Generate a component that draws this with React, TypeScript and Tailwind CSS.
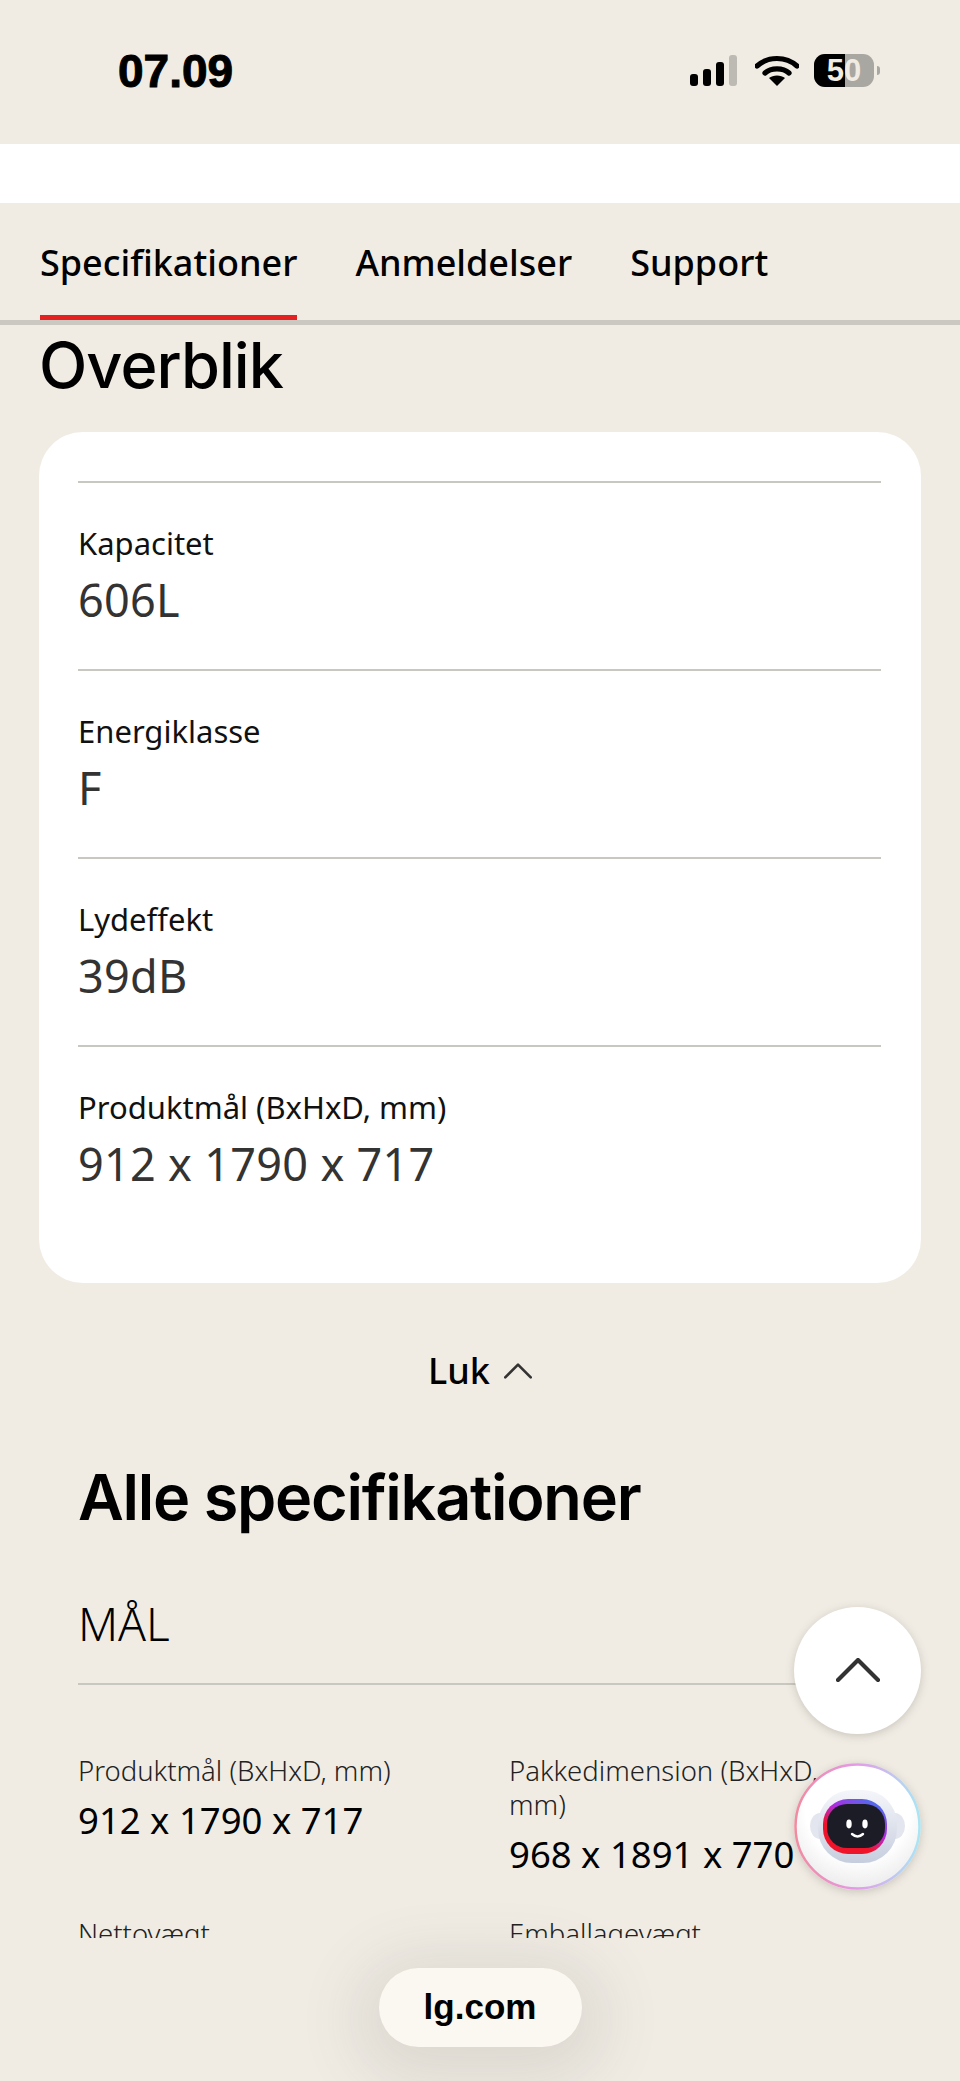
import React from "react";

const uiFont = "font-['Noto_Sans','Open_Sans',sans-serif]";

function Chevron({ className }: { className: string }) {
  return (
    <svg viewBox="0 0 44 24" fill="none" className={className}>
      <path d="M2 22 L22 2 L42 22" stroke="currentColor" strokeWidth="4.2" strokeLinecap="round" strokeLinejoin="round" />
    </svg>
  );
}

function StatusIcons() {
  return (
    <div className="flex items-center">
      <svg width="48" height="32" viewBox="0 0 48 32" className="mr-[17px]">
        <rect x="0" y="19" width="8" height="12" rx="3" fill="#000" />
        <rect x="13" y="14" width="8" height="17" rx="3" fill="#000" />
        <rect x="26" y="7" width="8" height="24" rx="3" fill="#000" />
        <rect x="39" y="0" width="8" height="31" rx="3" fill="#bdbab4" />
      </svg>
      <svg width="44" height="32" viewBox="0 0 44 32" className="mr-[15px]">
        <path d="M2 11 C13 1 31 1 42 11" fill="none" stroke="#000" strokeWidth="5.2" strokeLinecap="round" />
        <path d="M10 18 C16 12.5 28 12.5 34 18" fill="none" stroke="#000" strokeWidth="5.2" strokeLinecap="round" />
        <path d="M14 23 C18 19.5 26 19.5 30 23 L22 31 Z" fill="#000" />
      </svg>
      <div className="relative w-[60px] h-[33px] rounded-[11px] overflow-hidden bg-[#a9a7a1] flex items-center justify-center">
        <div className="absolute left-0 top-0 bottom-0 w-[31px] bg-black" />
        <span className="relative font-['Liberation_Sans',sans-serif] font-bold text-[31px] leading-none text-[#f0ece4]">50</span>
      </div>
      <div className="w-[3px] h-[9px] ml-[3px] rounded-r-full bg-[#a9a7a1]" />
    </div>
  );
}

function OverviewRow({ label, value }: { label: string; value: string }) {
  return (
    <div className="h-[188px] border-t-2 border-[#c9c8c0] pt-[40px]">
      <div className="text-[31px] leading-[40px] text-[#111]">{label}</div>
      <div className="mt-[7px] text-[45px] leading-[60px] tracking-[0.3px] text-[#333]">{value}</div>
    </div>
  );
}

function SpecCell({ label, value }: { label: string; value: string }) {
  return (
    <div>
      <div className="text-[27.5px] leading-[34px] font-[350] text-[#222]">{label}</div>
      <div className="mt-[8px] text-[36.5px] leading-[48px] whitespace-nowrap text-black">{value}</div>
    </div>
  );
}

// Round robot mascot on the chat launcher
function Mascot() {
  return (
    <svg width="127" height="127" viewBox="0 0 127 127">
      <defs>
        <linearGradient id="ring" x1="0" y1="0.5" x2="1" y2="0.5">
          <stop offset="0" stopColor="#f28aa0" />
          <stop offset="0.5" stopColor="#e39be8" />
          <stop offset="1" stopColor="#a8e6f5" />
        </linearGradient>
        <linearGradient id="visor" x1="0.85" y1="0" x2="0.15" y2="1">
          <stop offset="0" stopColor="#3f78f0" />
          <stop offset="0.4" stopColor="#b02be0" />
          <stop offset="0.68" stopColor="#f0142a" />
          <stop offset="1" stopColor="#f0142a" />
        </linearGradient>
        <radialGradient id="disc" cx="0.5" cy="0.35" r="0.7">
          <stop offset="0.6" stopColor="#ffffff" />
          <stop offset="1" stopColor="#e8e8ea" />
        </radialGradient>
        <linearGradient id="shell" x1="0" y1="0" x2="0" y2="1">
          <stop offset="0" stopColor="#f5f6fa" />
          <stop offset="1" stopColor="#c6cede" />
        </linearGradient>
      </defs>
      <circle cx="63.5" cy="63.5" r="62" fill="url(#disc)" stroke="url(#ring)" strokeWidth="2.5" />
      <ellipse cx="26" cy="63" rx="10" ry="13" fill="#e3e6ee" />
      <ellipse cx="101" cy="63" rx="10" ry="13" fill="#e3e6ee" />
      <rect x="24" y="27" width="79" height="73" rx="34" fill="url(#shell)" />
      <rect x="29" y="36" width="64" height="55" rx="25" fill="url(#visor)" />
      <rect x="33" y="41" width="58" height="44" rx="20" fill="#1c1c26" />
      <ellipse cx="55" cy="61" rx="2.7" ry="4.4" fill="#fff" />
      <ellipse cx="71" cy="61" rx="2.7" ry="4.4" fill="#fff" />
      <path d="M58 71 Q63.500 76 69 71" fill="none" stroke="#fff" strokeWidth="2.400" strokeLinecap="round" />
    </svg>
  );
}

export default function App() {
  return (
    <div className={`relative w-[960px] h-[2081px] overflow-hidden bg-[#f0ece4] ${uiFont}`}>
      <header className="h-[144px] flex items-center justify-between pl-[118px] pr-[80px] pb-[3px]">
        <span className="font-['Liberation_Sans',sans-serif] font-bold text-[46px] leading-none [-webkit-text-stroke:1px_black] text-black">07.09</span>
        <StatusIcons />
      </header>
      <div className="h-[59px] bg-white" />

      <nav className="h-[122px] border-b-[5px] border-[#cbc8c2] flex items-end pl-[40px] gap-[58px] text-[36px] font-medium text-black">
        <div className="h-full pt-[36px] border-b-[5px] border-[#e42020] leading-[48px]">Specifikationer</div>
        <div className="h-full pt-[36px] leading-[48px]">Anmeldelser</div>
        <div className="h-full pt-[36px] leading-[48px]">Support</div>
      </nav>

      <main className="h-[1613px] overflow-hidden">
        <h1 className="ml-[39px] mt-[2px] font-['Inter',sans-serif] font-[550] text-[63px] leading-[76px] tracking-[-0.015em] text-black">Overblik</h1>

        <section className="mx-[39px] mt-[29px] h-[851px] bg-white rounded-[44px] pl-[39px] pr-[40px] pt-[49px]">
          <OverviewRow label="Kapacitet" value="606L" />
          <OverviewRow label="Energiklasse" value="F" />
          <OverviewRow label="Lydeffekt" value="39dB" />
          <OverviewRow label="Produktmål (BxHxD, mm)" value="912 x 1790 x 717" />
        </section>

        <div className="mt-[64px] flex items-center justify-center gap-[14px] text-[36px] font-medium leading-[48px] text-black">
          <span>Luk</span>
          <Chevron className="w-[28px] h-[16px] text-[#333]" />
        </div>

        <h2 className="ml-[78px] mt-[62px] font-['Inter',sans-serif] font-semibold text-[63px] leading-[80px] tracking-[-0.02em] text-black">Alle specifikationer</h2>

        <div className="ml-[78px] mr-[79px] mt-[56px] h-[92px] border-b-2 border-[#c9c8c0] text-[46px] leading-[60px] font-[350] text-black">MÅL</div>

        <div className="ml-[78px] mt-[69px] grid grid-cols-[431px_340px] gap-y-[39px]">
          <SpecCell label="Produktmål (BxHxD, mm)" value="912 x 1790 x 717" />
          <SpecCell label="Pakkedimension (BxHxD, mm)" value="968 x 1891 x 770" />
          <SpecCell label="Nettovægt" value="109 kg" />
          <SpecCell label="Emballagevægt" value="118 kg" />
        </div>
      </main>

      <footer className="h-[143px] flex items-start justify-center pt-[30px]">
        <div className="w-[203px] h-[79px] rounded-[40px] bg-[#fbf8f1] flex items-center justify-center shadow-[0_12px_60px_24px_rgba(90,85,70,0.12)] font-['Liberation_Sans',sans-serif] font-bold text-[35px] text-black">
          lg.com
        </div>
      </footer>

      {/* Floating actions pinned to the right edge */}
      <button className="absolute left-[794px] top-[1607px] w-[127px] h-[127px] rounded-full bg-white flex items-center justify-center shadow-[0_2px_8px_rgba(90,85,70,0.25)] text-[#333]">
        <Chevron className="w-[44px] h-[24px] -mt-[2px]" />
      </button>
      <div className="absolute left-[794px] top-[1763px] w-[127px] h-[127px] rounded-full shadow-[0_2px_8px_rgba(90,85,70,0.25)]">
        <Mascot />
      </div>
    </div>
  );
}
